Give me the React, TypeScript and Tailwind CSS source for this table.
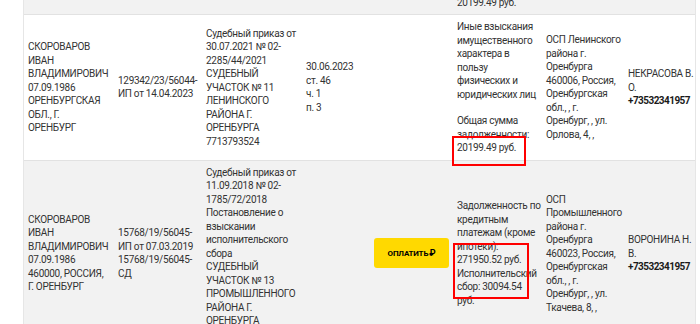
import React from "react";

type Row = {
  bg: string;
  cells: React.ReactNode[];
};

const Lines = ({ items }: { items: string[] }) => (
  <div>
    {items.map((t, i) => (
      <div key={i} className="whitespace-nowrap">
        {t}
      </div>
    ))}
  </div>
);

const cols = "grid grid-cols-[90px_88px_100px_68px_83px_89px_82px_71px]";

function PayButton() {
  return (
    <button className="flex h-[30px] w-[78px] items-center justify-center rounded-[3px] bg-[#ffd900] text-[8px] font-bold tracking-[-0.2px] text-black">
      ОПЛАТИТЬ<span className="ml-[1px] text-[9px]">₽</span>
    </button>
  );
}

const Phone = () => (
  <div className="font-bold tracking-[-0.55px] text-[#1a1a1a]">+73532341957</div>
);

const rows: Row[] = [
  {
    bg: "bg-white",
    cells: [
      <Lines
        items={[
          "СКОРОВАРОВ",
          "ИВАН",
          "ВЛАДИМИРОВИЧ",
          "07.09.1986",
          "ОРЕНБУРГСКАЯ",
          "ОБЛ., Г.",
          "ОРЕНБУРГ",
        ]}
      />,
      <Lines items={["129342/23/56044-", "ИП от 14.04.2023"]} />,
      <Lines
        items={[
          "Судебный приказ от",
          "30.07.2021 № 02-",
          "2285/44/2021",
          "СУДЕБНЫЙ",
          "УЧАСТОК № 11",
          "ЛЕНИНСКОГО",
          "РАЙОНА Г.",
          "ОРЕНБУРГА",
          "7713793524",
        ]}
      />,
      <Lines items={["30.06.2023", "ст. 46", "ч. 1", "п. 3"]} />,
      null,
      <div>
        <Lines
          items={[
            "Иные взыскания",
            "имущественного",
            "характера в",
            "пользу",
            "физических и",
            "юридических лиц",
          ]}
        />
        <div className="mt-[13px]">
          <Lines items={["Общая сумма", "задолженности:", "20199.49 руб."]} />
        </div>
      </div>,
      <Lines
        items={[
          "ОСП Ленинского",
          "района г.",
          "Оренбурга",
          "460006, Россия,",
          "Оренбургская",
          "обл., , г.",
          "Оренбург, , ул.",
          "Орлова, 4, ,",
        ]}
      />,
      <div>
        <Lines items={["НЕКРАСОВА В.", "О."]} />
        <Phone />
      </div>,
    ],
  },
  {
    bg: "bg-[#f2f2f2]",
    cells: [
      <Lines
        items={[
          "СКОРОВАРОВ",
          "ИВАН",
          "ВЛАДИМИРОВИЧ",
          "07.09.1986",
          "460000, РОССИЯ,",
          "Г. ОРЕНБУРГ",
        ]}
      />,
      <Lines
        items={["15768/19/56045-", "ИП от 07.03.2019", "15768/19/56045-", "СД"]}
      />,
      <Lines
        items={[
          "Судебный приказ от",
          "11.09.2018 № 02-",
          "1785/72/2018",
          "Постановление о",
          "взыскании",
          "исполнительского",
          "сбора",
          "СУДЕБНЫЙ",
          "УЧАСТОК № 13",
          "ПРОМЫШЛЕННОГО",
          "РАЙОНА Г.",
          "ОРЕНБУРГА",
          "7713793524",
        ]}
      />,
      null,
      <PayButton />,
      <Lines
        items={[
          "Задолженность по",
          "кредитным",
          "платежам (кроме",
          "ипотеки):",
          "271950.52 руб.",
          "Исполнительский",
          "сбор: 30094.54",
          "руб.",
        ]}
      />,
      <Lines
        items={[
          "ОСП",
          "Промышленного",
          "района г.",
          "Оренбурга",
          "460023, Россия,",
          "Оренбургская",
          "обл., , г.",
          "Оренбург, , ул.",
          "Ткачева, 8, ,",
        ]}
      />,
      <div>
        <Lines items={["ВОРОНИНА Н.", "В."]} />
        <Phone />
      </div>,
    ],
  },
];

export default function App() {
  return (
    <div
      className="relative h-[324px] w-[700px] overflow-hidden bg-white text-[10px] leading-[13.5px] tracking-[-0.3px] text-[#333]"
      style={{ fontFamily: "Roboto, 'Noto Sans', sans-serif" }}
    >
      <div className="ml-[23px] w-[673px] border-x border-[#e6e6e6]">
        {/* tail of the previous row, scrolled out of view */}
        <div className={`${cols} h-[15px] overflow-hidden border-b border-[#e2e2e2] bg-[#f2f2f2]`}>
          <div className="col-start-6 flex h-[14px] items-end px-[4px] pb-[5px]">
            <div className="whitespace-nowrap leading-[13.5px]">20199.49 руб.</div>
          </div>
        </div>

        {rows.map((row, r) => (
          <div key={r} className={`${cols} ${row.bg} border-b border-[#e2e2e2]`}>
            {row.cells.map((cell, c) => (
              <div key={c} className="flex items-center px-[4px] py-[5px]">
                {cell}
              </div>
            ))}
          </div>
        ))}
      </div>

      {/* red highlight frames drawn over the table */}
      <div className="absolute left-[452px] top-[136px] h-[30px] w-[74px] border-2 border-[#ff0000]" />
      <div className="absolute left-[453px] top-[243px] h-[56px] w-[76px] border-2 border-[#ff0000]" />
    </div>
  );
}
